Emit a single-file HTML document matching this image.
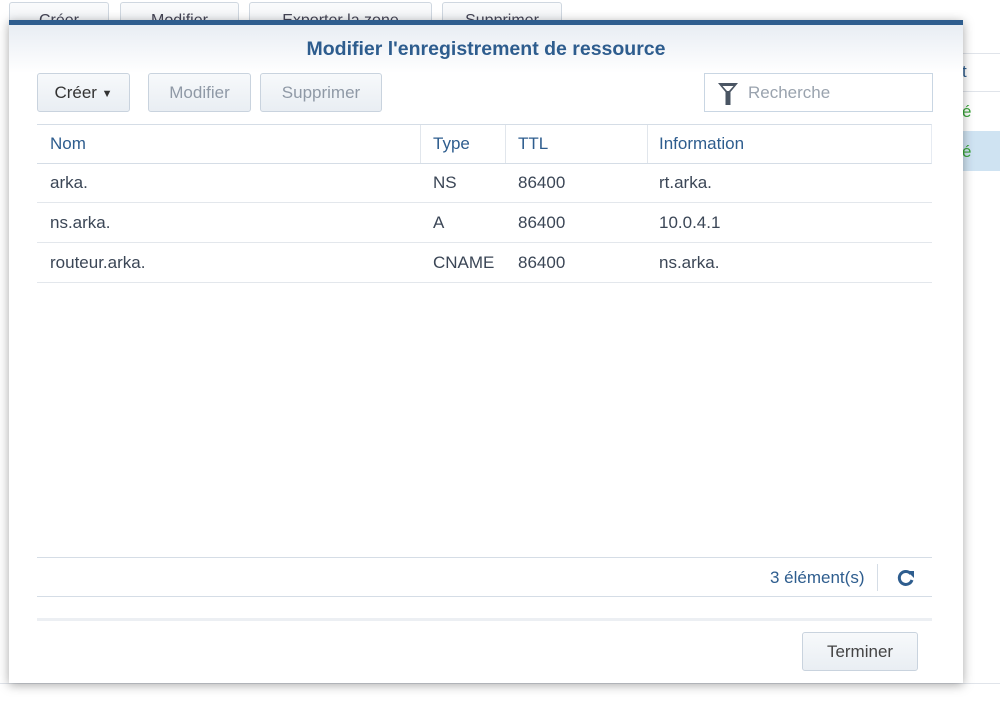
<!DOCTYPE html>
<html><head><meta charset="utf-8"><style>
*{box-sizing:border-box;margin:0;padding:0}
body{width:1000px;height:701px;background:#fff;position:relative;overflow:hidden;font-family:"Liberation Sans",sans-serif;font-size:17px;color:#3b4656}
.abs{position:absolute}
.bgbtn{position:absolute;top:2px;height:30px;border:1px solid #cfd7e0;border-radius:3px;background:linear-gradient(#fafbfc,#eef1f5);color:#445;font-size:16px;text-align:center;padding-top:9px}
.dlg{position:absolute;left:9px;top:20px;width:954px;height:663px;background:#fff;border-top:5px solid #2e5d8e;box-shadow:0 2px 10px rgba(0,0,0,.35)}
.btn{position:absolute;height:39px;border:1px solid #c9d3de;border-radius:3px;background:linear-gradient(#f7f9fb,#e9eef3);text-align:center;line-height:37px;font-size:17px}
.row{position:absolute;left:28px;width:895px;height:40px;border-bottom:1px solid #e3e7ec;line-height:39px}
.row span{position:absolute;top:0}
</style></head><body>
<div class="bgbtn" style="left:9px;width:100px">Créer</div>
<div class="bgbtn" style="left:120px;width:119px">Modifier</div>
<div class="bgbtn" style="left:249px;width:183px">Exporter la zone</div>
<div class="bgbtn" style="left:442px;width:120px">Supprimer</div>
<div class="abs" style="left:940px;top:53px;width:60px;border-top:1px solid #e0e4ea"></div>
<div class="abs" style="left:940px;top:91px;width:60px;border-top:1px solid #e0e4ea"></div>
<div class="abs" style="left:940px;top:131px;width:60px;height:40px;background:#cfe3f2"></div>
<div class="abs" style="left:962px;top:62px;color:#2e5d8e">t</div>
<div class="abs" style="left:962px;top:102px;color:#3aa53a">é</div>
<div class="abs" style="left:962px;top:142px;color:#3aa53a">é</div>
<div class="abs" style="left:0;top:683px;width:1000px;border-top:1px solid #e0e4ea"></div>

<div class="dlg">
 <div class="abs" style="left:0;top:0;width:954px;height:48px;background:linear-gradient(#e8edf3,#fff)"></div>
 <div class="abs" style="left:0;top:13px;width:954px;text-align:center;font-weight:bold;font-size:19.5px;color:#2e5d8e">Modifier l'enregistrement de ressource</div>
 <div class="btn" style="left:28px;top:48px;width:93px;color:#333">Créer <span style="font-size:11px;vertical-align:1px">▼</span></div>
 <div class="btn" style="left:139px;top:48px;width:103px;color:#8f99a6">Modifier</div>
 <div class="btn" style="left:251px;top:48px;width:122px;color:#8f99a6">Supprimer</div>
 <div class="abs" style="left:695px;top:48px;width:229px;height:39px;border:1px solid #c9d6e3">
  <svg class="abs" style="left:12px;top:8px" width="22" height="24" viewBox="0 0 22 24"><path d="M1 1h20l-7.5 9v13h-5v-13z" fill="#4a5563"/><path d="M5.5 4h11l-4.5 5h-2z" fill="#fff"/></svg>
  <span class="abs" style="left:43px;top:9px;color:#9aa3ae">Recherche</span>
 </div>
 <div class="abs" style="left:28px;top:99px;width:895px;height:40px;border-top:1px solid #d5dde6;border-bottom:1px solid #d5dde6;border-right:1px solid #e6ebf2;color:#2e5d8e;line-height:38px">
  <span class="abs" style="left:13px">Nom</span>
  <span class="abs" style="left:383px;top:0;height:38px;border-left:1px solid #e1e6ec"></span>
  <span class="abs" style="left:396px">Type</span>
  <span class="abs" style="left:468px;top:0;height:38px;border-left:1px solid #e1e6ec"></span>
  <span class="abs" style="left:481px">TTL</span>
  <span class="abs" style="left:610px;top:0;height:38px;border-left:1px solid #e1e6ec"></span>
  <span class="abs" style="left:622px">Information</span>
 </div>
 <div class="row" style="top:138px"><span style="left:13px">arka.</span><span style="left:396px">NS</span><span style="left:481px">86400</span><span style="left:622px">rt.arka.</span></div>
 <div class="row" style="top:178px"><span style="left:13px">ns.arka.</span><span style="left:396px">A</span><span style="left:481px">86400</span><span style="left:622px">10.0.4.1</span></div>
 <div class="row" style="top:218px"><span style="left:13px">routeur.arka.</span><span style="left:396px">CNAME</span><span style="left:481px">86400</span><span style="left:622px">ns.arka.</span></div>
 <div class="abs" style="left:28px;top:532px;width:895px;height:40px;border-top:1px solid #d5dde6;border-bottom:1px solid #d5dde6">
  <span class="abs" style="left:733px;top:10px;color:#2e5d8e">3 élément(s)</span>
  <span class="abs" style="left:840px;top:6px;height:27px;border-left:1px solid #d5dde6"></span>
  <svg class="abs" style="left:860px;top:11px" width="18" height="18" viewBox="0 0 18 18"><path d="M14 5A6.5 6.5 0 1 0 15 11" fill="none" stroke="#2e5d8e" stroke-width="3"/><path d="M10 2h7v7z" fill="#2e5d8e"/></svg>
 </div>
 <div class="abs" style="left:28px;top:593px;width:895px;border-top:3px solid #eceff3"></div>
 <div class="btn" style="left:793px;top:607px;width:116px;color:#444">Terminer</div>
</div>
</body></html>
